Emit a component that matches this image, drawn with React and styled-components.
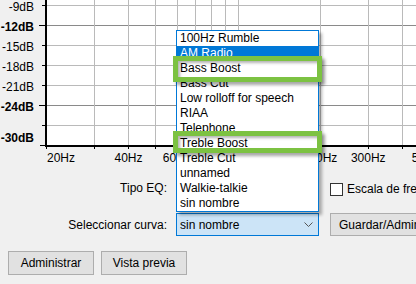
import React from 'react';
import styled, { createGlobalStyle } from 'styled-components';

const GlobalStyle = createGlobalStyle`
    html, body { margin: 0; padding: 0; background: #f0f0f0; }
    body { font-family: "Liberation Sans", Arial, sans-serif; font-size: 12px; color: #000; }
`

const curves = [
    '100Hz Rumble', 'AM Radio', 'Bass Boost', 'Bass Cut', 'Low rolloff for speech', 'RIAA',
    'Telephone', 'Treble Boost', 'Treble Cut', 'unnamed', 'Walkie-talkie', 'sin nombre',
];

// log frequency scale of the graph
const fx = (f) => 46 + 274 * Math.log10(f / 20);

const gridFreqs = [30, 40, 50, 60, 70, 80, 90, 100, 200, 300, 400, 500, 600];
const freqLabels = [40, 60, 200, 300, 500];
const dbTicks = [
    { y: 5, label: '-9dB' },
    { y: 25, label: '-12dB', major: true },
    { y: 45, label: '-15dB' },
    { y: 65, label: '-18dB' },
    { y: 85, label: '-21dB' },
    { y: 105, label: '-24dB', major: true },
    { y: 125 },
];

const Chart = () => (
    <ChartSvg width="416" height="170" viewBox="0 0 416 170">
        <rect x="46" y="0" width="370" height="145" fill="#fff" />
        {dbTicks.map((t) => (
            <line key={t.y} x1="47" x2="416" y1={t.y + 0.5} y2={t.y + 0.5}
                stroke={t.major ? '#8a8a8a' : '#bababa'} />
        ))}
        {gridFreqs.map((f) => (
            <line key={f} x1={Math.round(fx(f)) + 0.5} x2={Math.round(fx(f)) + 0.5} y1="0" y2="145"
                stroke="#bababa" />
        ))}
        <rect x="45" y="0" width="2" height="147" fill="#000" />
        <rect x="45" y="145" width="371" height="2" fill="#000" />

        {dbTicks.map((t) => (
            <g key={'t' + t.y}>
                <line x1={t.major ? 39 : 42} x2="45" y1={t.y + 0.5} y2={t.y + 0.5} stroke="#000" />
                {t.label && (
                    <text x="34" y={t.y + 6} textAnchor="end" fontWeight={t.major ? 700 : 400}>{t.label}</text>
                )}
            </g>
        ))}
        <line x1="40" x2="45" y1="145.5" y2="145.5" stroke="#000" />
        <text x="34" y="142" textAnchor="end" fontWeight="700">-30dB</text>

        {[20, ...gridFreqs].map((f) => (
            <line key={'f' + f} x1={Math.round(fx(f)) + 0.5} x2={Math.round(fx(f)) + 0.5} y1="147" y2="149" stroke="#000" />
        ))}
        <text x="47" y="162">20Hz</text>
        {freqLabels.map((f) => (
            <text key={'l' + f} x={fx(f)} y="162" textAnchor="middle">{f}Hz</text>
        ))}
    </ChartSvg>
)

const App = () => {
    return (
        <Window>
            <GlobalStyle />
            <Chart />

            <Controls>
                <Label>Tipo EQ:</Label>
                <div />
                <CheckCell>
                    <CheckBox />
                    <span>Escala de frecuencia lineal</span>
                </CheckCell>

                <Label>Seleccionar curva:</Label>
                <ComboWrap>
                    <DropList>
                        {curves.map((c) => (
                            <Item key={c} selected={c === 'AM Radio'}>{c}</Item>
                        ))}
                    </DropList>
                    <Combo>
                        <span>sin nombre</span>
                        <svg width="9" height="6" viewBox="0 0 9 6">
                            <polyline points="0.5,0.5 4.5,4.5 8.5,0.5" fill="none" stroke="#555" />
                        </svg>
                    </Combo>
                </ComboWrap>
                <ButtonCell>
                    <Button>Guardar/Administrar curvas...</Button>
                </ButtonCell>
            </Controls>

            <ButtonRow>
                <Button wide>Administrar</Button>
                <Button wide>Vista previa</Button>
            </ButtonRow>

            <Highlight top={56} height={26} />
            <Highlight top={131} height={22} />
        </Window>
    )
}

const Window = styled.div`
    position: relative;
    width: 416px;
    height: 284px;
    overflow: hidden;
    background: #f0f0f0;
    display: flex;
    flex-direction: column;
`

const ChartSvg = styled.svg`
    display: block;
    flex: none;
    font-family: "Liberation Sans", Arial, sans-serif;
    font-size: 12px;
    shape-rendering: crispEdges;
    text { shape-rendering: auto; }
`

const Controls = styled.div`
    display: grid;
    grid-template-columns: 176px 143px 1fr;
    grid-template-rows: 20px 23px;
    row-gap: 15px;
    padding-top: 8px;
`

const Label = styled.div`
    display: flex;
    align-items: center;
    justify-content: flex-end;
    padding-right: 9px;
    white-space: nowrap;
`

const CheckCell = styled.div`
    display: flex;
    align-items: center;
    gap: 4px;
    padding-left: 11px;
    padding-top: 2px;
    white-space: nowrap;
`

const CheckBox = styled.span`
    flex: none;
    width: 11px;
    height: 11px;
    border: 1px solid #333;
    background: #fff;
`

const ComboWrap = styled.div`
    position: relative;
`

const Combo = styled.div`
    height: 100%;
    box-sizing: border-box;
    border: 1px solid #0078d7;
    background: #cce4f7;
    display: flex;
    align-items: center;
    justify-content: space-between;
    padding: 0 5px 0 3px;
`

const DropList = styled.div`
    position: absolute;
    left: 0;
    right: 0;
    bottom: calc(100% + 1px);
    border: 1px solid #0078d7;
    background: #fff;
    box-shadow: 3px 3px 3px rgba(0, 0, 0, 0.3);
    z-index: 2;
`

const Item = styled.div`
    height: 15px;
    line-height: 15px;
    padding-left: 3px;
    white-space: nowrap;
    overflow: hidden;
    background: ${(p) => (p.selected ? '#0078d7' : 'transparent')};
    color: ${(p) => (p.selected ? '#fff' : '#000')};
`

const ButtonCell = styled.div`
    padding-left: 11px;
    display: flex;
`

const Button = styled.div`
    box-sizing: border-box;
    height: ${(p) => (p.wide ? '24px' : '23px')};
    width: ${(p) => (p.wide ? '86px' : 'auto')};
    padding: 0 8px;
    flex: none;
    display: flex;
    align-items: center;
    justify-content: center;
    background: #e1e1e1;
    border: 1px solid #adadad;
    white-space: nowrap;
`

const ButtonRow = styled.div`
    display: flex;
    gap: 7px;
    padding-left: 8px;
    margin-top: 15px;
`

const Highlight = styled.div`
    position: absolute;
    left: 173px;
    width: 149px;
    top: ${(p) => p.top}px;
    height: ${(p) => p.height}px;
    box-sizing: border-box;
    border: 5px solid #7cc242;
    box-shadow: 3px 3px 3px rgba(0, 0, 0, 0.35), inset 3px 3px 3px -1px rgba(0, 0, 0, 0.3);
    z-index: 3;
`

export default App
